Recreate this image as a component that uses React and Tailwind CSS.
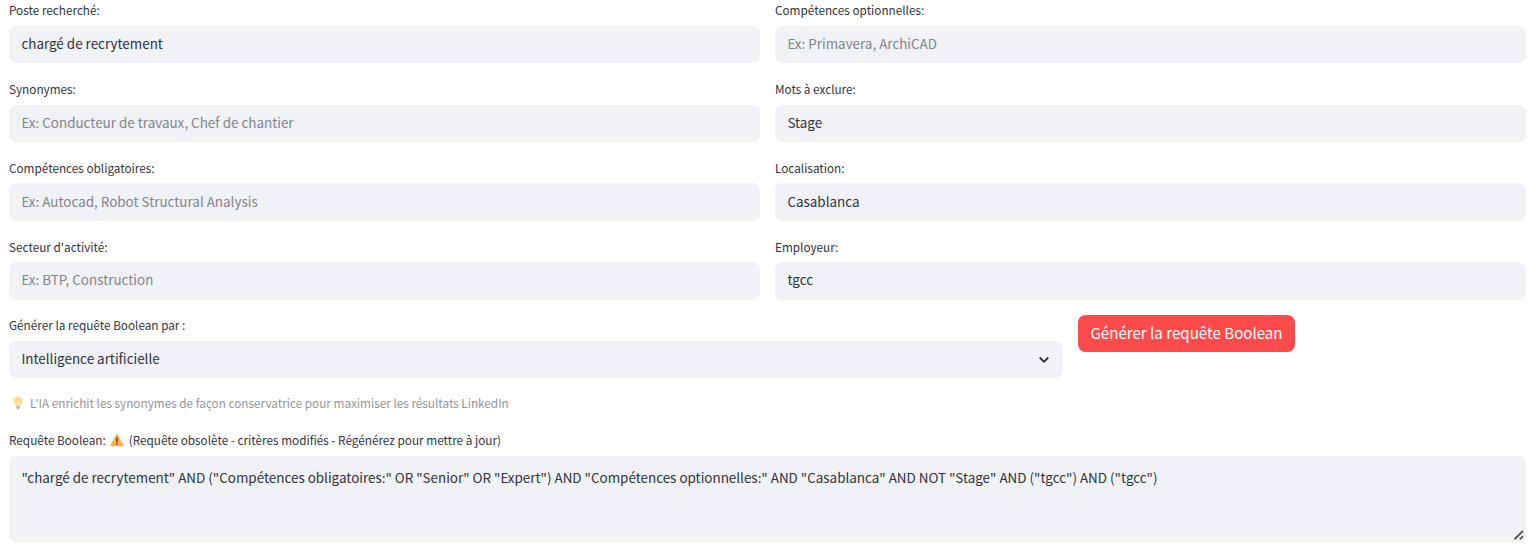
import React from "react";

function Label({ children }) {
  return (
    <div className="flex h-[22.5px] items-center whitespace-nowrap pb-[1px] text-[11.76px] leading-none text-[#31333f]">
      {children}
    </div>
  );
}

function Field({ label, value, placeholder }) {
  return (
    <label className="flex flex-col gap-[3.75px]">
      <Label>{label}</Label>
      <input
        type="text"
        defaultValue={value}
        placeholder={placeholder}
        className="h-[37.5px] w-full rounded-[7.5px] bg-[#f0f2f6] px-[12.4px] pb-[3.1px] text-[13.43px] leading-[21px] text-[#31333f] outline-none placeholder:text-[#83858c] placeholder:opacity-100"
      />
    </label>
  );
}

function Bulb() {
  return (
    <svg viewBox="0 0 14 14" className="ml-[2px] mr-[5px] h-[14px] w-[14px] shrink-0 opacity-60">
      <path d="M7 .4a4.500 4.500 0 0 0-4.500 4.500c0 2.400 2.200 3.100 2.400 5.100h4.200c.2-2 2.400-2.700 2.400-5.100A4.500 4.500 0 0 0 7 .4Z" fill="#ffc83d" />
      <path d="M5.400 5.200 6.500 6v4h1V6l1.100-.8" fill="none" stroke="#fff0a8" strokeWidth=".7" />
      <path d="M4.900 9.800h4.200v1.800c0 .5-.4.8-.8.9-.2.6-.7.9-1.300.9s-1.100-.3-1.300-.9c-.4-.1-.8-.4-.8-.9Z" fill="#9b8fa8" />
    </svg>
  );
}

function Warning() {
  return (
    <svg viewBox="0 0 14 14" className="ml-[4.500px] mr-[4.500px] h-[14px] w-[14px] shrink-0">
      <path d="M6.200 1.500a.9.9 0 0 1 1.600 0l5.700 10.400a.9.9 0 0 1-.8 1.300H1.300a.9.9 0 0 1-.8-1.300Z" fill="#ffb04a" />
      <path d="M7 5v3.800" stroke="#4a3a35" strokeWidth="1.400" strokeLinecap="round" />
      <circle cx="7" cy="11" r=".85" fill="#4a3a35" />
    </svg>
  );
}

const fields = [
  { label: "Poste recherché:", value: "chargé de recrytement" },
  { label: "Compétences optionnelles:", placeholder: "Ex: Primavera, ArchiCAD" },
  { label: "Synonymes:", placeholder: "Ex: Conducteur de travaux, Chef de chantier" },
  { label: "Mots à exclure:", value: "Stage" },
  { label: "Compétences obligatoires:", placeholder: "Ex: Autocad, Robot Structural Analysis" },
  { label: "Localisation:", value: "Casablanca" },
  { label: "Secteur d'activité:", placeholder: "Ex: BTP, Construction" },
  { label: "Employeur:", value: "tgcc" },
];

const query =
  '"chargé de recrytement" AND ("Compétences obligatoires:" OR "Senior" OR "Expert") AND "Compétences optionnelles:" AND "Casablanca" AND NOT "Stage" AND ("tgcc") AND ("tgcc")';

export default function App() {
  return (
    <div className="h-[552px] overflow-hidden bg-white pl-[9px] pr-[12px] font-['Noto_Sans_CJK_SC',sans-serif]">
      <div className="-mt-[0.45px] flex flex-col gap-[15px]">
        <div className="grid grid-cols-2 gap-[15px]">
          {fields.map((f) => (
            <Field key={f.label} {...f} />
          ))}
        </div>

        <div className="flex items-start gap-[15px]">
          <div className="flex w-[1054px] flex-col gap-[3.75px]">
            <Label>Générer la requête Boolean par :</Label>
            <div className="flex h-[37.5px] items-center justify-between rounded-[7.5px] bg-[#f0f2f6] pl-[12.4px] pr-[13.5px] text-[13.43px] leading-none text-[#31333f]">
              <span className="pb-[1.6px]">Intelligence artificielle</span>
              <svg viewBox="0 0 12 12" className="h-[12px] w-[12px]" fill="none" stroke="#31333f" strokeWidth="1.8">
                <path d="m1.700 3.500 4.300 4.200L10.300 3.500" />
              </svg>
            </div>
          </div>
          <button className="flex h-[37.5px] w-[217px] items-center justify-center whitespace-nowrap rounded-[7.5px] bg-[#ff4b4b] pb-[1.6px] text-[15.1px] leading-none text-white">
            Générer la requête Boolean
          </button>
        </div>

        <div className="flex h-[21px] items-center whitespace-nowrap pb-[1.5px] text-[11.76px] leading-none text-[#94959b]">
          <Bulb />
          <span>L'IA enrichit les synonymes de façon conservatrice pour maximiser les résultats LinkedIn</span>
        </div>

        <div className="flex flex-col gap-[3.75px]">
          <Label>
            <span>Requête Boolean:</span>
            <Warning />
            <span>(Requête obsolète - critères modifiés - Régénérez pour mettre à jour)</span>
          </Label>
          <div className="relative">
            <textarea
              defaultValue={query}
              className="block h-[86px] w-full resize-none rounded-[7.5px] bg-[#f0f2f6] px-[12.4px] py-[11px] text-[13.43px] leading-[21px] text-[#31333f] outline-none"
            />
            <svg viewBox="0 0 10 10" className="absolute bottom-[2px] right-[2px] h-[10px] w-[10px]" stroke="#4b4c52" strokeWidth="1.7">
              <path d="M.5 9.300 9 .8M5.800 9.300 9 6.100" />
            </svg>
          </div>
        </div>
      </div>
    </div>
  );
}
